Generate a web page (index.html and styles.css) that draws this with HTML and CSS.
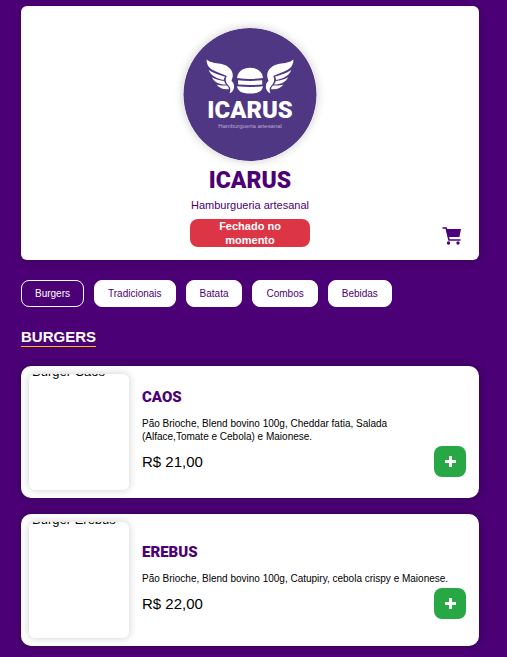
FILE: index.html
```html
<!DOCTYPE html>
<html lang="pt-BR">
<head>
<meta charset="utf-8">
<meta name="viewport" content="width=device-width, initial-scale=1">
<title>Icarus</title>
<link rel="stylesheet" href="styles.css">
</head>
<body>
<header class="hero">
  <svg class="logo" viewBox="0 0 134 134" aria-hidden="true">
    <circle cx="67" cy="67" r="67" fill="#503783"/>
    <g transform="translate(17 22) scale(.33333)" fill="#fff">
      <g id="wing">
        <path d="M19 29C29 39 45 39 61 42C83 46 98 60 98 77C98 85 95 90 94 94C102 98 105 114 98 124C96 128 93 130 88 131C92 123 92 114 85 108C75 98 75 87 80 79C66 72 50 68 36 60C24 53 18 42 19 29Z"/>
        <path d="M25 60C38 71 56 74 75 81C71 85 71 88 71 91C52 87 32 80 25 60Z"/>
        <path d="M35 83C46 90 59 93 72 94C73 98 75 102 78 105C60 106 42 99 35 83Z"/>
        <path d="M49 105C59 109 69 108 80 108C84 111 86 114 86 119C70 121 56 116 49 105Z"/>
      </g>
      <use href="#wing" transform="translate(300 0) scale(-1 1)"/>
      <path d="M111 85C112 66 129 54 150 54C171 54 188 66 189 85Q150 91 111 85Z"/>
      <path d="M114 92Q150 96 187 92V105Q150 108 114 105Z"/>
      <path d="M111 110Q150 114 189 110C188 124 175 132 150 132C125 132 112 124 111 110Z"/>
    </g>
    <text class="logo-name" x="67" y="91" text-anchor="middle">ICARUS</text>
    <text class="logo-tag" x="67" y="101" text-anchor="middle">Hamburgueria artesanal</text>
  </svg>
  <h1 class="name">ICARUS</h1>
  <p class="tagline">Hamburgueria artesanal</p>
  <p class="status">Fechado no momento</p>
  <button class="cart" type="button" aria-label="Carrinho">
    <svg viewBox="0 0 20 18" aria-hidden="true">
      <path d="M1 1H4.2L7 13H18" fill="none" stroke="currentColor" stroke-width="1.6" stroke-linecap="round" stroke-linejoin="round"/>
      <path d="M4 2H19L17.400 10H6Z" fill="currentColor"/>
      <circle cx="6.500" cy="16" r="1.700" fill="currentColor"/>
      <circle cx="16" cy="16" r="1.700" fill="currentColor"/>
    </svg>
  </button>
</header>

<nav class="tabs">
  <a class="tab active" href="#burgers">Burgers</a>
  <a class="tab" href="#tradicionais">Tradicionais</a>
  <a class="tab" href="#batata">Batata</a>
  <a class="tab" href="#combos">Combos</a>
  <a class="tab" href="#bebidas">Bebidas</a>
</nav>

<main id="burgers">
  <h2 class="section-title">BURGERS</h2>
  <article class="card">
    <div class="photo"><span>Burger Caos</span></div>
    <div class="info">
      <h3 class="item-name">CAOS</h3>
      <p class="desc">Pão Brioche, Blend bovino 100g, Cheddar fatia, Salada (Alface,Tomate e Cebola) e Maionese.</p>
      <div class="buy">
        <span class="price">R$ 21,00</span>
        <button class="add" type="button" aria-label="Adicionar Caos"><svg viewBox="0 0 11 11" aria-hidden="true"><path d="M4 0H7V4H11V7H7V11H4V7H0V4H4Z" fill="currentColor"/></svg></button>
      </div>
    </div>
  </article>
  <article class="card">
    <div class="photo"><span>Burger Erebus</span></div>
    <div class="info">
      <h3 class="item-name">EREBUS</h3>
      <p class="desc">Pão Brioche, Blend bovino 100g, Catupiry, cebola crispy e Maionese.</p>
      <div class="buy">
        <span class="price">R$ 22,00</span>
        <button class="add" type="button" aria-label="Adicionar Erebus"><svg viewBox="0 0 11 11" aria-hidden="true"><path d="M4 0H7V4H11V7H7V11H4V7H0V4H4Z" fill="currentColor"/></svg></button>
      </div>
    </div>
  </article>
</main>
</body>
</html>
```
FILE: styles.css
```css
* {
  box-sizing: border-box;
}

body {
  margin: 0;
  padding: 6px 28px 10px 21px;
  background: #4b0075;
  color: #000;
  font-family: "Liberation Sans", Arial, sans-serif;
}

h1, h2, h3, p {
  margin: 0;
}

.hero {
  position: relative;
  display: flex;
  flex-direction: column;
  align-items: center;
  padding: 22px 16px 13px;
  border-radius: 6px;
  background: #fff;
  color: #4b0075;
  box-shadow: 0 2px 8px rgba(0, 0, 0, .2);
}

.logo {
  width: 134px;
  height: 133px;
  border-radius: 50%;
  box-shadow: 0 0 10px rgba(0, 0, 0, .2);
}

.logo-name,
.name,
.item-name {
  font-family: Roboto, "Liberation Sans", sans-serif;
  font-weight: 900;
}

.logo-name {
  fill: #fff;
  font-size: 24px;
}

.logo-tag {
  fill: #b9aacf;
  font-size: 6px;
}

.name {
  margin-top: 4px;
  font-size: 23px;
  line-height: 32px;
}

.tagline {
  font-size: 11px;
  line-height: 16px;
}

.status {
  width: 120px;
  margin-top: 6px;
  padding: 0 16px;
  border-radius: 8px;
  background: #dc3545;
  color: #fff;
  font-size: 11px;
  font-weight: 700;
  line-height: 14px;
  text-align: center;
}

.cart {
  position: absolute;
  right: 17px;
  bottom: 15px;
  width: 20px;
  height: 18px;
  padding: 0;
  border: 0;
  background: none;
  color: #4b0082;
}

.cart svg,
.add svg {
  display: block;
}

.tabs {
  display: flex;
  flex-wrap: wrap;
  gap: 10px;
  margin-top: 20px;
}

.tab {
  padding: 0 13px;
  border: 1px solid #fff;
  border-radius: 8px;
  background: #fff;
  color: #4b0075;
  font-size: 10px;
  line-height: 25px;
  text-decoration: none;
}

.tab.active {
  background: #4b0075;
  color: #fff;
}

.section-title {
  width: fit-content;
  margin: 20px 0 19px;
  border-bottom: 1px solid #ffc107;
  color: #fff;
  font-size: 15px;
  line-height: 19px;
}

.card {
  display: flex;
  gap: 13px;
  margin-bottom: 16px;
  padding: 8px;
  border-radius: 10px;
  background: #fff;
  box-shadow: 0 0 8px rgba(0, 0, 0, .3);
}

.photo {
  flex: 0 0 100px;
  height: 116px;
  padding-left: 3px;
  overflow: hidden;
  border-radius: 6px;
  box-shadow: 0 0 8px rgba(0, 0, 0, .2);
  font-size: 13px;
  line-height: 16px;
}

.photo span {
  display: block;
  margin-top: -10px;
}

.info {
  flex: 1;
  display: flex;
  flex-direction: column;
  justify-content: center;
}

.item-name {
  color: #4b0075;
  font-size: 15px;
  line-height: 20px;
}

.desc {
  margin-top: 10px;
  padding-right: 18px;
  font-size: 10px;
  line-height: 13px;
}

.buy {
  display: flex;
  align-items: center;
  justify-content: space-between;
  margin-top: 3px;
  padding-right: 5px;
}

.price {
  font-size: 15px;
}

.add {
  display: grid;
  place-items: center;
  width: 32px;
  height: 31px;
  padding: 0;
  border: 0;
  border-radius: 8px;
  background: #28a745;
  color: #fff;
}

.add svg {
  width: 11px;
  height: 11px;
}
```
